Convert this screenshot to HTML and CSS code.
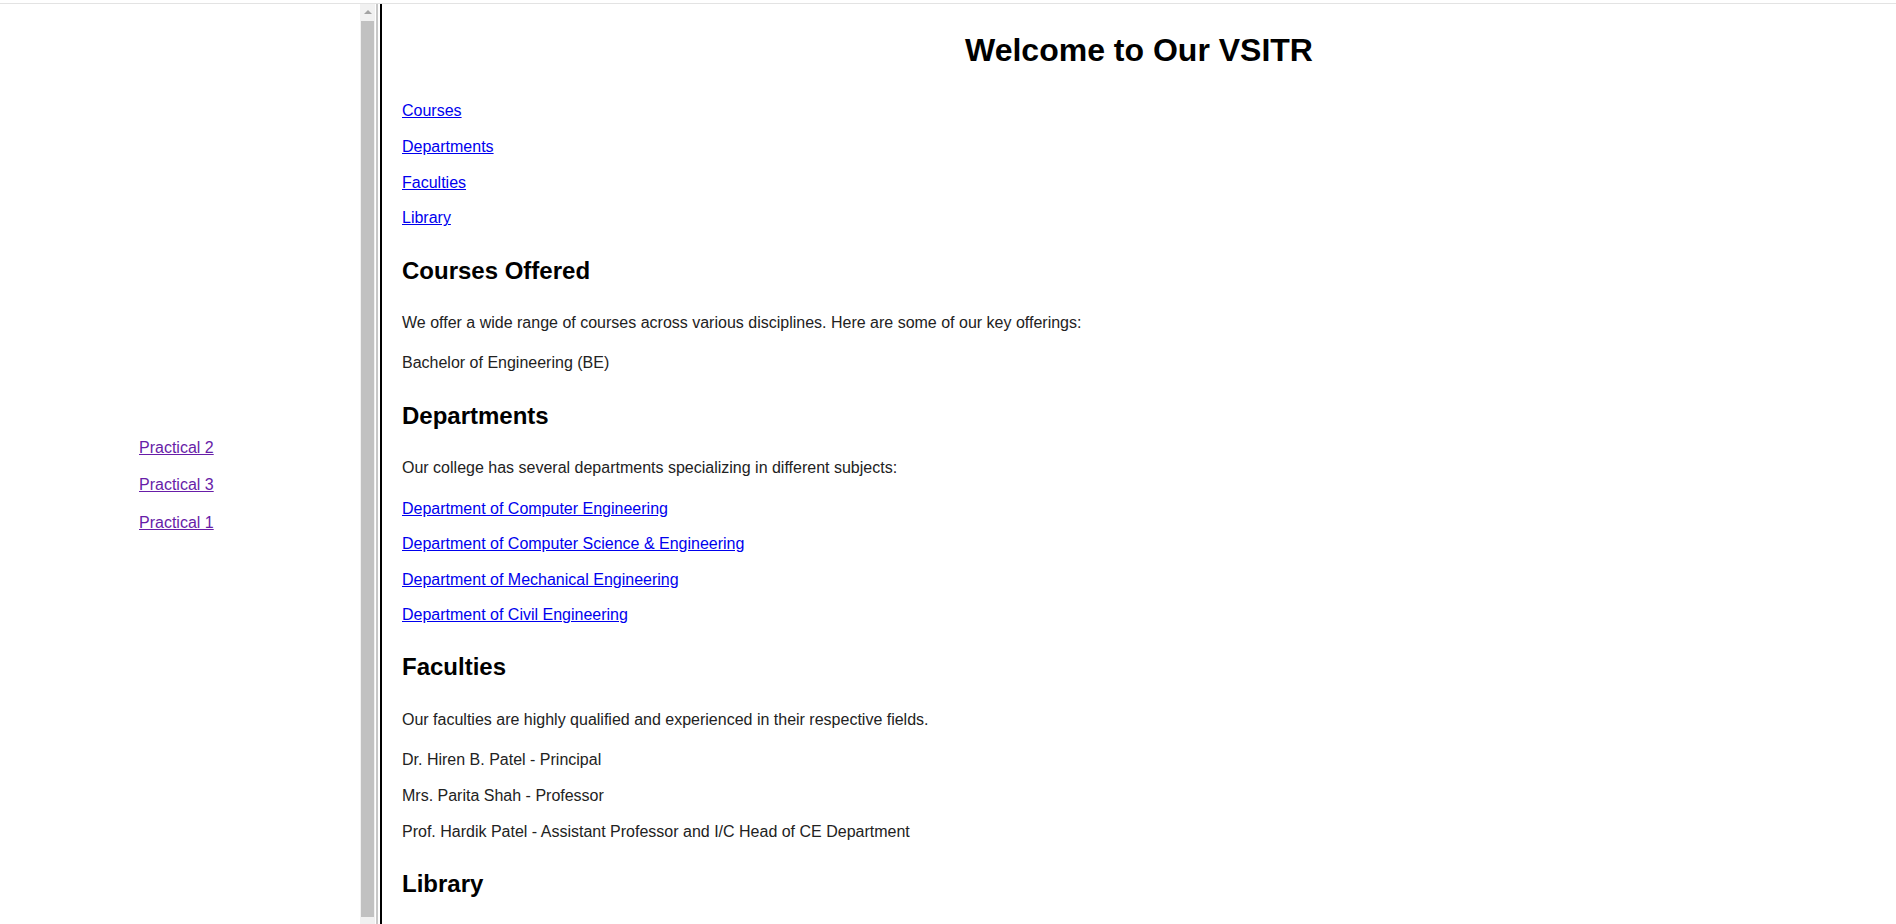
FILE: index.html
```html
<!DOCTYPE html>
<html lang="en">
<head>
<meta charset="utf-8">
<title>VSITR</title>
<link rel="stylesheet" href="styles.css">
</head>
<body>
<div class="topline"></div>
<div class="frames">
  <div class="left-frame">
    <nav class="side-nav">
      <a href="#p2" class="side-link">Practical 2</a>
      <a href="#p3" class="side-link">Practical 3</a>
      <a href="#p1" class="side-link">Practical 1</a>
    </nav>
  </div>
  <div class="scrollbar">
    <div class="sb-button"><span class="sb-arrow"></span></div>
    <div class="sb-thumb"></div>
  </div>
  <div class="divider"></div>
  <div class="right-frame">
    <h1 class="title">Welcome to Our VSITR</h1>
    <div class="toc">
      <a href="#courses" class="link">Courses</a>
      <a href="#departments" class="link">Departments</a>
      <a href="#faculties" class="link">Faculties</a>
      <a href="#library" class="link">Library</a>
    </div>

    <h2 class="section-title" id="courses">Courses Offered</h2>
    <p class="desc">We offer a wide range of courses across various disciplines. Here are some of our key offerings:</p>
    <div class="items">
      <p class="item">Bachelor of Engineering (BE)</p>
    </div>

    <h2 class="section-title" id="departments">Departments</h2>
    <p class="desc">Our college has several departments specializing in different subjects:</p>
    <div class="items">
      <a href="#ce" class="link">Department of Computer Engineering</a>
      <a href="#cse" class="link">Department of Computer Science &amp; Engineering</a>
      <a href="#me" class="link">Department of Mechanical Engineering</a>
      <a href="#civil" class="link">Department of Civil Engineering</a>
    </div>

    <h2 class="section-title" id="faculties">Faculties</h2>
    <p class="desc">Our faculties are highly qualified and experienced in their respective fields.</p>
    <div class="items">
      <p class="item">Dr. Hiren B. Patel - Principal</p>
      <p class="item">Mrs. Parita Shah - Professor</p>
      <p class="item">Prof. Hardik Patel - Assistant Professor and I/C Head of CE Department</p>
    </div>

    <h2 class="section-title" id="library">Library</h2>
  </div>
</div>
</body>
</html>
```

FILE: styles.css
```css
html, body {
  margin: 0;
  padding: 0;
  height: 924px;
  overflow: hidden;
  background: #ffffff;
  font-family: "Liberation Sans", Arial, sans-serif;
}

.topline {
  height: 3px;
  border-bottom: 1px solid #e3e3e3;
  background: #ffffff;
}

.frames {
  display: flex;
  height: 920px;
}

.left-frame {
  width: 360px;
  flex: none;
}

.side-nav {
  display: flex;
  flex-direction: column;
  padding: 424.5px 0 0 139px;
}

.side-link {
  font-size: 16px;
  line-height: 37.5px;
  color: #681da8;
  text-decoration: underline;
  align-self: flex-start;
}

.scrollbar {
  width: 15px;
  flex: none;
  background: #f1f1f1;
  display: flex;
  flex-direction: column;
}

.sb-button {
  height: 16px;
  display: flex;
  justify-content: center;
  align-items: center;
}

.sb-arrow {
  width: 0;
  height: 0;
  border-left: 4px solid transparent;
  border-right: 4px solid transparent;
  border-bottom: 4px solid #a3a3a3;
}

.sb-thumb {
  margin: 1px 1px 0 1px;
  height: 896px;
  background: #c1c1c1;
}

.divider {
  width: 7px;
  flex: none;
  background: linear-gradient(to right,
    #ffffff 0, #ffffff 1px,
    #c8c8c8 1px, #c8c8c8 3px,
    #ffffff 3px, #ffffff 5px,
    #000000 5px, #000000 7px);
}

.right-frame {
  flex: 1;
  display: flex;
  flex-direction: column;
  align-items: flex-start;
  padding: 27.5px 20px 0 20px;
  color: #222222;
}

.title {
  align-self: stretch;
  margin: 0;
  font-size: 32px;
  line-height: 37px;
  font-weight: bold;
  text-align: center;
  color: #000000;
}

.toc {
  margin-top: 32.5px;
  display: flex;
  flex-direction: column;
  align-items: flex-start;
  gap: 15.8px;
}

.link {
  font-size: 16px;
  line-height: 20px;
  color: #0000ee;
  text-decoration: underline;
}

.section-title {
  margin: 28.2px 0 28.2px 0;
  font-size: 24px;
  line-height: 28px;
  font-weight: bold;
  color: #000000;
}

.desc {
  margin: 0;
  font-size: 16px;
  line-height: 20px;
}

.items {
  margin-top: 20.7px;
  display: flex;
  flex-direction: column;
  align-items: flex-start;
  gap: 15.6px;
}

.item {
  margin: 0;
  font-size: 16px;
  line-height: 20px;
}
```
